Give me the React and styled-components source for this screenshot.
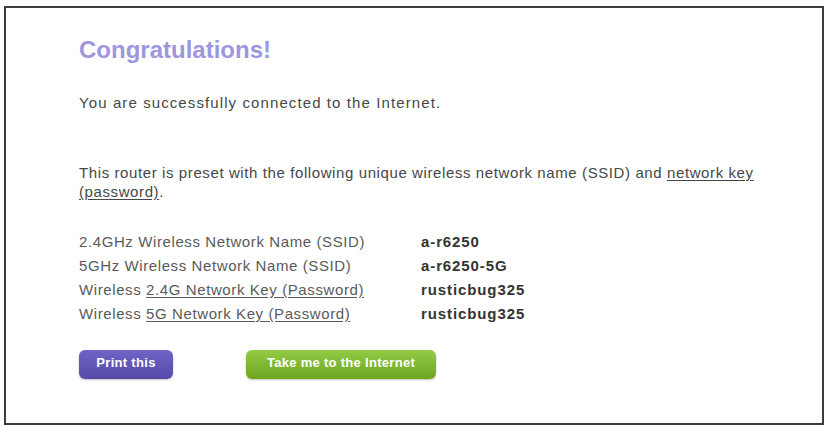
import React from 'react';
import styled, { createGlobalStyle } from 'styled-components';

const GlobalStyle = createGlobalStyle`
  html, body {
    margin: 0;
    padding: 0;
    background: #fdfdfd;
  }
  body {
    font-family: "Liberation Sans", Arial, sans-serif;
  }
`;

const Frame = styled.div`
  box-sizing: border-box;
  margin: 6px 0 0 4px;
  width: 820px;
  height: 419px;
  border: 2px solid #3c3c3c;
  background: #fff;
  padding: 28px 0 0 73px;
`;

const Title = styled.h1`
  margin: 0;
  font-size: 24px;
  line-height: 28px;
  font-weight: bold;
  color: #9c97df;
`;

const Text = styled.p`
  margin: ${(p) => p.$top || 0}px 0 0;
  width: 700px;
  font-size: 15px;
  line-height: 19px;
  letter-spacing: ${(p) => p.$ls || 0.6}px;
  color: #474747;
`;

const Link = styled.span`
  text-decoration: underline;
  text-underline-offset: 2px;
`;

const Table = styled.div`
  margin-top: 31px;
  display: grid;
  grid-template-columns: 342px auto;
  row-gap: 4px;
  font-size: 15px;
  line-height: 20px;
  letter-spacing: 0.6px;
`;

const Label = styled.div`
  color: #5a5a5a;
`;

const Value = styled.div`
  color: #333;
  font-weight: bold;
  letter-spacing: 0.9px;
`;

const Buttons = styled.div`
  margin-top: 26px;
  display: flex;
  gap: 73px;
`;

const Button = styled.button`
  box-sizing: border-box;
  height: 29px;
  width: ${(p) => p.$w}px;
  border: none;
  border-radius: 6px;
  font-family: "Liberation Sans", Arial, sans-serif;
  font-size: 13px;
  font-weight: bold;
  color: #fff;
  letter-spacing: 0.3px;
  background: ${(p) =>
    p.$green
      ? 'linear-gradient(#92cb45, #6da520)'
      : 'linear-gradient(#6e64c6, #564aa8)'};
  box-shadow: 0 1px 2px rgba(0, 0, 0, 0.25);
  padding: 0 0 4px;
`;

const rows = [
  [<>2.4GHz Wireless Network Name (SSID)</>, 'a-r6250'],
  [<>5GHz Wireless Network Name (SSID)</>, 'a-r6250-5G'],
  [<>Wireless <Link>2.4G Network Key (Password)</Link></>, 'rusticbug325'],
  [<>Wireless <Link>5G Network Key (Password)</Link></>, 'rusticbug325'],
];

export default function App() {
  return (
    <>
      <GlobalStyle />
      <Frame>
        <Title>Congratulations!</Title>
        <Text $top={29} $ls={1.1}>You are successfully connected to the Internet.</Text>
        <Text $top={51}>
          This router is preset with the following unique wireless network name (SSID) and{' '}
          <Link>network key</Link> <Link>(password)</Link>.
        </Text>
        <Table>
          {rows.map(([label, value], i) => (
            <React.Fragment key={i}>
              <Label>{label}</Label>
              <Value>{value}</Value>
            </React.Fragment>
          ))}
        </Table>
        <Buttons>
          <Button $w={94}>Print this</Button>
          <Button $w={190} $green>Take me to the Internet</Button>
        </Buttons>
      </Frame>
    </>
  );
}
